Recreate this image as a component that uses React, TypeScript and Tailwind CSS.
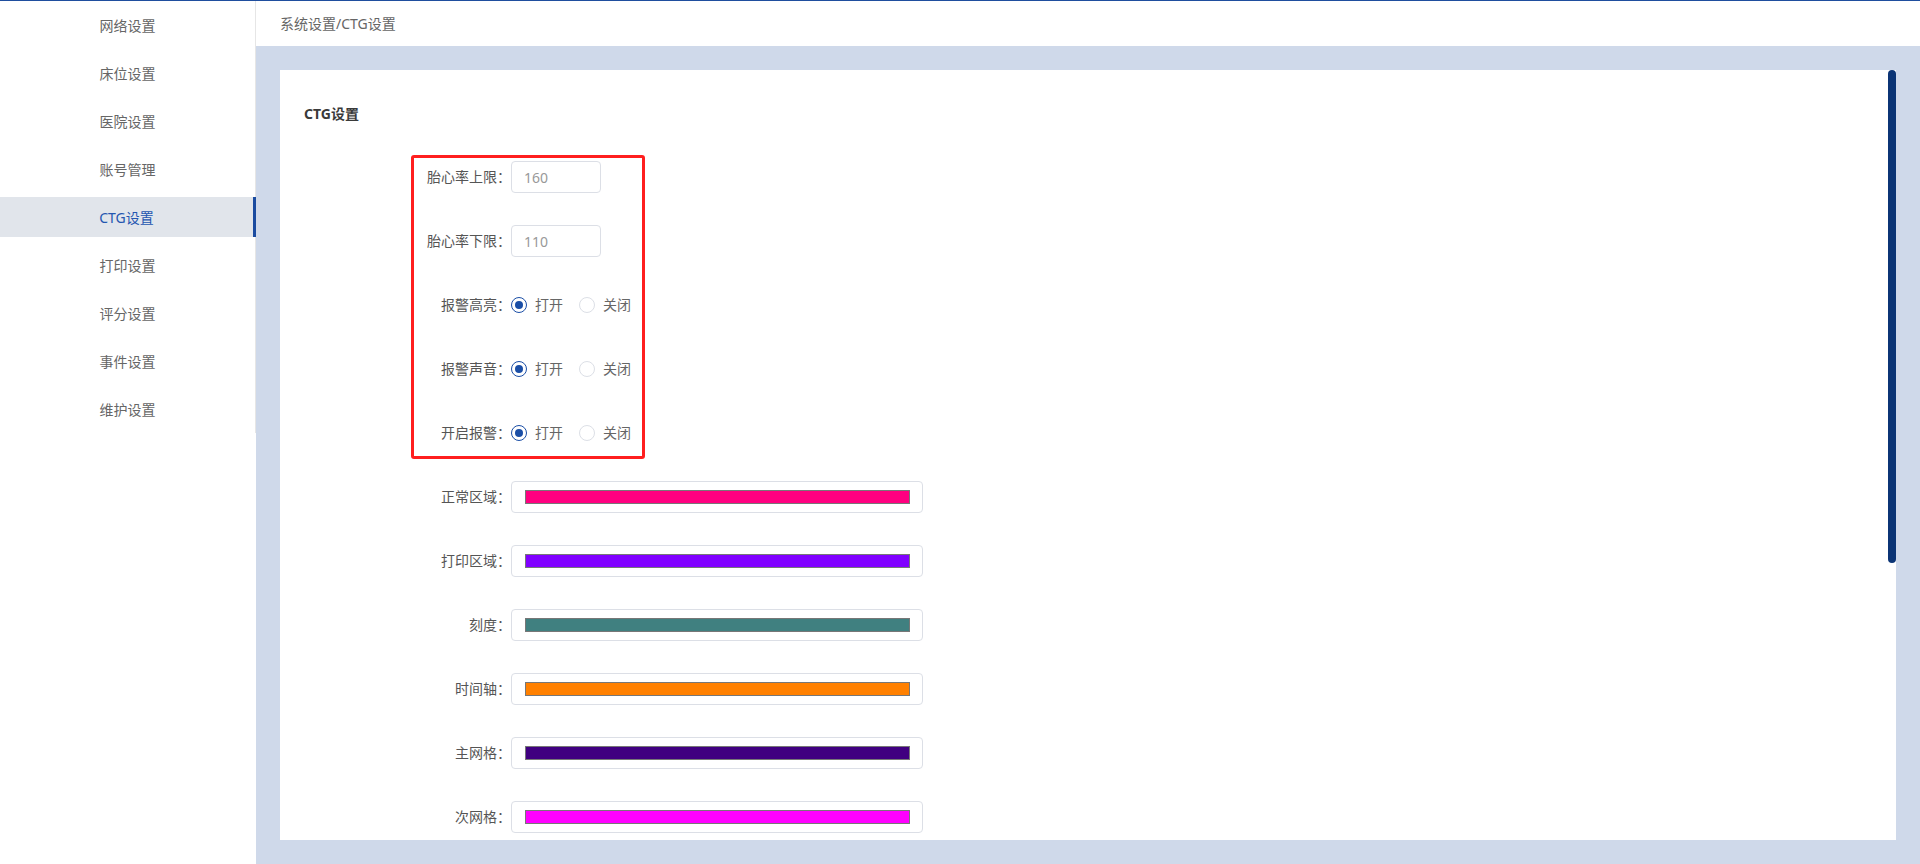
import React from 'react';

const menu = ['网络设置', '床位设置', '医院设置', '账号管理', 'CTG设置', '打印设置', '评分设置', '事件设置', '维护设置'];

const colorRows = [
  { label: '正常区域', color: '#ff0080' },
  { label: '打印区域', color: '#8000ff' },
  { label: '刻度', color: '#408080' },
  { label: '时间轴', color: '#ff8000' },
  { label: '主网格', color: '#400080' },
  { label: '次网格', color: '#ff00ff' },
];

function Row({ label, children }: { label: string; children: React.ReactNode }) {
  return (
    <div className="flex h-16 items-center">
      <div className="w-[231px] shrink-0 text-right text-[14px] leading-5 text-[#555]">{label}：</div>
      {children}
    </div>
  );
}

function Radio({ checked, text }: { checked?: boolean; text: string }) {
  return (
    <label className="flex items-center gap-2">
      <span
        className={
          checked
            ? 'flex h-4 w-4 items-center justify-center rounded-full border-[1.5px] border-[#1a4ea6] bg-white'
            : 'flex h-4 w-4 items-center justify-center rounded-full border border-[#dcdfe6] bg-white'
        }
      >
        {checked && <span className="h-2 w-2 rounded-full bg-[#1a4ea6]" />}
      </span>
      <span className="text-[14px] leading-5 text-[#666]">{text}</span>
    </label>
  );
}

function Switch() {
  return (
    <div className="flex items-center gap-4">
      <Radio checked text="打开" />
      <Radio text="关闭" />
    </div>
  );
}

export default function App() {
  return (
    <div className="flex h-screen flex-col overflow-hidden border-t border-[#1f4e9e] bg-white font-['Noto_Sans','Noto_Sans_CJK_SC',sans-serif]">
      <div className="flex min-h-0 flex-1">
        <aside className="flex w-[256px] shrink-0 flex-col self-start border-r border-[#e6e6e6] bg-white">
          {menu.map((m) => (
            <div
              key={m}
              className={
                m === 'CTG设置'
                  ? 'my-1 -mr-px flex h-10 items-center justify-center border-r-[3px] border-[#1a4ba0] bg-[#e1e5eb] text-[14px] text-[#2456b0]'
                  : 'my-1 flex h-10 items-center justify-center text-[14px] text-[#666]'
              }
            >
              {m}
            </div>
          ))}
        </aside>

        <main className="flex min-w-0 flex-1 flex-col">
          <header className="flex h-[45px] shrink-0 items-center bg-white pl-6 text-[14px] text-[#666]">
            系统设置/CTG设置
          </header>
          <div className="min-h-0 flex-1 bg-[#cfd9ea] p-6">
            <div className="relative h-full overflow-hidden bg-white">
              {/* scroll thumb */}
              <div className="absolute right-0 top-0 h-[493px] w-2 rounded-full bg-[#0b3475]" />

              <div className="px-6 pt-[34px] text-[14px] font-bold leading-5 text-[#3a3a3a]">CTG设置</div>

              <div className="relative mt-[21px]">
                <div className="pointer-events-none absolute left-[131px] top-[10px] h-[304px] w-[234px] rounded-[3px] border-[3px] border-[#ff1f1f]" />

                <Row label="胎心率上限">
                  <div className="flex h-8 w-[90px] items-center rounded border border-[#dcdfe6] px-3 text-[14px] text-[#999]">160</div>
                </Row>
                <Row label="胎心率下限">
                  <div className="flex h-8 w-[90px] items-center rounded border border-[#dcdfe6] px-3 text-[14px] text-[#999]">110</div>
                </Row>
                <Row label="报警高亮">
                  <Switch />
                </Row>
                <Row label="报警声音">
                  <Switch />
                </Row>
                <Row label="开启报警">
                  <Switch />
                </Row>

                {colorRows.map((c) => (
                  <Row key={c.label} label={c.label}>
                    <div className="flex h-8 w-[412px] items-center rounded border border-[#dcdfe6] pl-[13px]">
                      <div className="h-[14px] w-[385px] border border-[#777]" style={{ backgroundColor: c.color }} />
                    </div>
                  </Row>
                ))}
              </div>
            </div>
          </div>
        </main>
      </div>
    </div>
  );
}
